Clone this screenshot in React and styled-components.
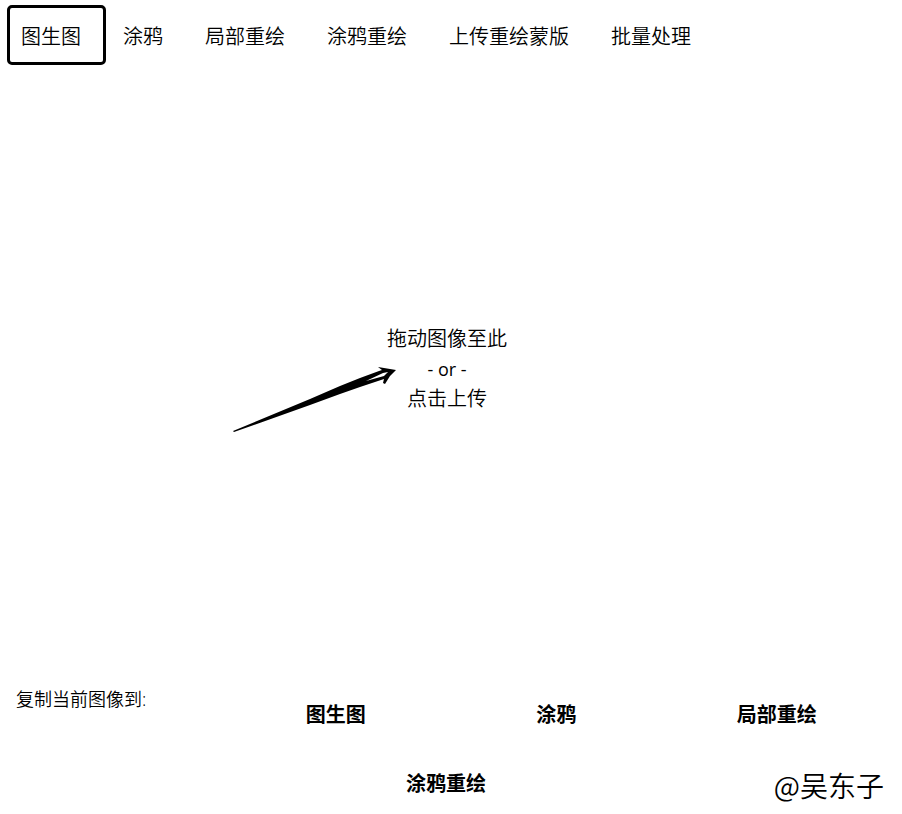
import React, { useState } from "react";
import styled, { createGlobalStyle } from "styled-components";

const Global = createGlobalStyle`
  *, *::before, *::after { box-sizing: border-box; }
  body {
    margin: 0;
    background: #fff;
    color: #000;
    font-family: "Open Sans", "Noto Sans CJK SC", sans-serif;
  }
`;

const Page = styled.main`
  display: flex;
  flex-direction: column;
  min-height: 100vh;
`;

const BaseButton = styled.button.attrs({ type: "button" })`
  margin: 0;
  padding: 0;
  border: 0;
  background: none;
  color: inherit;
  font-family: inherit;
  font-size: 20px;
  line-height: 30px;
  cursor: pointer;
`;

const Tabs = styled.div`
  display: flex;
  flex-wrap: wrap;
  gap: 3px;
  padding: 5px 7px 0;
`;

const Tab = styled(BaseButton)`
  height: 60px;
  padding: 4px 22px 0 11px;
  border: 3px solid ${(p) => (p.$active ? "#000" : "transparent")};
  border-radius: 5px;
  font-weight: 350;
`;

const DropZone = styled(BaseButton)`
  position: relative;
  flex: 1;
  display: flex;
  flex-direction: column;
  align-items: center;
  justify-content: center;
  min-height: 200px;
  margin-right: 8px;
  font-weight: 350;
`;

const Or = styled.span`
  font-size: 18px;
  font-weight: 400;
`;

const Arrow = styled.svg`
  position: absolute;
  right: calc(50% + 50px);
  top: calc(50% - 3px);
  width: 165px;
  height: 67px;
`;

const Footer = styled.footer`
  position: relative;
  display: grid;
  grid-template-columns: repeat(4, 1fr);
  grid-template-rows: 86px 52px;
  padding: 0 15px 4px 5px;
`;

const Label = styled.span`
  padding: 12px 0 0 11px;
  font-size: 18px;
  font-weight: 350;
  line-height: 30px;
`;

const CopyButton = styled(BaseButton)`
  grid-column: ${(p) => (p.$wide ? "1 / -1" : "auto")};
  font-weight: 700;
`;

const Watermark = styled.span`
  position: absolute;
  right: 18px;
  bottom: 9px;
  font-family: "Noto Sans CJK SC", sans-serif;
  font-size: 28px;
  font-weight: 350;
  line-height: 40px;
`;

const tabs = ["图生图", "涂鸦", "局部重绘", "涂鸦重绘", "上传重绘蒙版", "批量处理"];
const targets = ["图生图", "涂鸦", "局部重绘", "涂鸦重绘"];

export default function App() {
  const [active, setActive] = useState(0);
  return (
    <Page>
      <Global />
      <Tabs role="tablist">
        {tabs.map((name, i) => (
          <Tab
            key={name}
            role="tab"
            aria-selected={i === active}
            $active={i === active}
            onClick={() => setActive(i)}
          >
            {name}
          </Tab>
        ))}
      </Tabs>
      <DropZone>
        <span>拖动图像至此</span>
        <Or>- or -</Or>
        <span>点击上传</span>
        <Arrow viewBox="232 366 165 67" aria-hidden="true">
          <path
            fillRule="evenodd"
            d="M233 431 L310 399 L340 386 L360 378 L379 371 L382 370 L378 367 L384 368 L396 370 L390 376 L385 384 L383 383 L384 379 L360 387 L340 394 L310 405 L234 432 Z M366 381 L384 376 L388 372 L383 373 Z"
          />
        </Arrow>
      </DropZone>
      <Footer>
        <Label id="copy-label">复制当前图像到:</Label>
        {targets.map((name, i) => (
          <CopyButton key={name} $wide={i === 3} aria-describedby="copy-label">
            {name}
          </CopyButton>
        ))}
        <Watermark>@吴东子</Watermark>
      </Footer>
    </Page>
  );
}
